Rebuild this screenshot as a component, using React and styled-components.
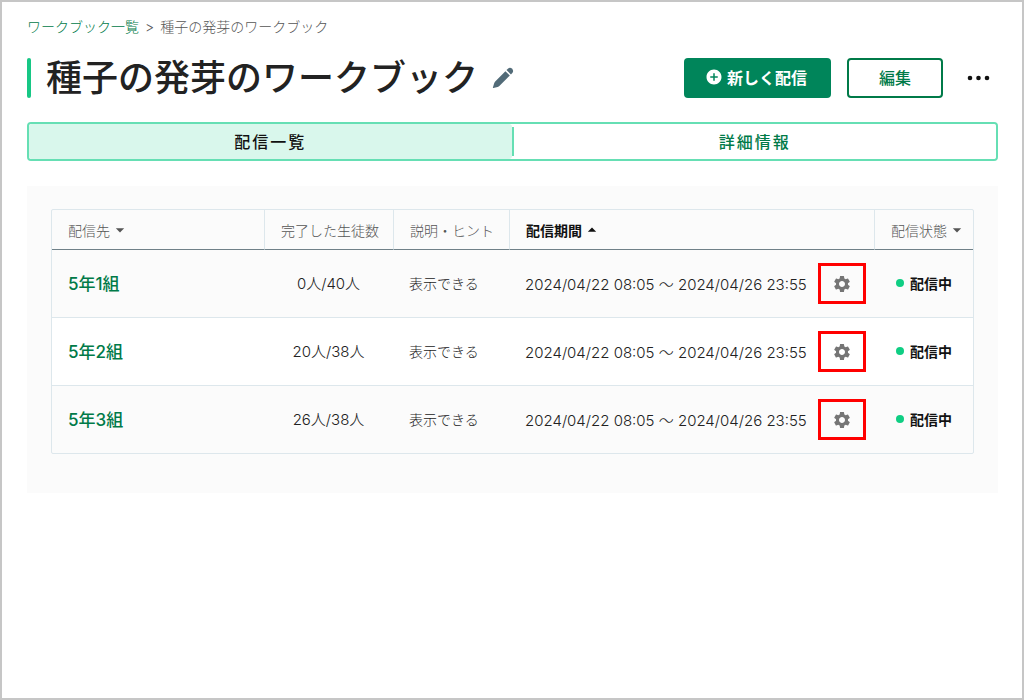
import React, { Fragment, useState } from "react";
import styled, { createGlobalStyle } from "styled-components";
import { MdAddCircle, MdArrowDropDown, MdArrowDropUp, MdSettings } from "react-icons/md";

const deliveries = [
    { id: 1, name: "5年1組", done: 0, total: 40 },
    { id: 2, name: "5年2組", done: 20, total: 38 },
    { id: 3, name: "5年3組", done: 26, total: 38 },
];

const tabs = ["配信一覧", "詳細情報"];

const PencilIcon = () => (
    <svg width="22" height="22" viewBox="0 0 22 22" fill="#526b78">
        <path d="M13.4 4.2 17.8 8.6 7.6 18.8 Q6.8 19.6 5.6 19.9 L1.4 21.1 Q.7 21.2.9 20.5 L2.1 16.4 Q2.4 15.2 3.2 14.4Z" />
        <path d="M14.5 3.1 15.9 1.7 Q18 0 20.2 1.8 Q22 4 20.3 6.1 L18.9 7.5Z" />
    </svg>
);

const App = () => {
    const [activeTab, setActiveTab] = useState(tabs[0]);

    return (
        <Page>
            <GlobalStyle />
            <Breadcrumb aria-label="パンくず">
                <CrumbLink href="#">ワークブック一覧</CrumbLink>
                <span>&gt;</span>
                <span>種子の発芽のワークブック</span>
            </Breadcrumb>

            <Header>
                <TitleBar>
                    <Title>種子の発芽のワークブック</Title>
                    <IconButton aria-label="名前を編集">
                        <PencilIcon />
                    </IconButton>
                </TitleBar>
                <Actions>
                    <PrimaryButton>
                        <MdAddCircle size={18} />
                        新しく配信
                    </PrimaryButton>
                    <OutlineButton>編集</OutlineButton>
                    <MenuButton aria-label="メニュー">
                        <svg width="24" height="6" viewBox="0 0 24 6" fill="#111">
                            <circle cx="3" cy="3" r="2.3" />
                            <circle cx="11.5" cy="3" r="2.3" />
                            <circle cx="20" cy="3" r="2.3" />
                        </svg>
                    </MenuButton>
                </Actions>
            </Header>

            <Tabs role="tablist">
                {tabs.map((tab, i) => (
                    <Fragment key={tab}>
                        {i > 0 && <TabDivider />}
                        <Tab
                            role="tab"
                            aria-selected={tab === activeTab}
                            $active={tab === activeTab}
                            onClick={() => setActiveTab(tab)}
                        >
                            {tab}
                        </Tab>
                    </Fragment>
                ))}
            </Tabs>

            <Panel>
                <Table>
                    <thead>
                        <tr>
                            <Th>
                                <SortButton>配信先<MdArrowDropDown size={20} /></SortButton>
                            </Th>
                            <Th $width={129}>完了した生徒数</Th>
                            <Th $width={116}>説明・ヒント</Th>
                            <Th $width={365}>
                                <SortButton $sorted>配信期間<MdArrowDropUp size={20} /></SortButton>
                            </Th>
                            <Th $width={99}>
                                <SortButton>配信状態<MdArrowDropDown size={20} /></SortButton>
                            </Th>
                        </tr>
                    </thead>
                    <tbody>
                        {deliveries.map((d) => (
                            <Row key={d.id}>
                                <Td><ClassLink href="#">{d.name}</ClassLink></Td>
                                <CountTd>{d.done}人/{d.total}人</CountTd>
                                <Td>表示できる</Td>
                                <PeriodTd>
                                    <Period>
                                        2024/04/22 08:05 〜 2024/04/26 23:55
                                        <SettingButton aria-label={`${d.name}の配信設定`}>
                                            <MdSettings size={20} />
                                        </SettingButton>
                                    </Period>
                                </PeriodTd>
                                <Td>
                                    <Status><Dot />配信中</Status>
                                </Td>
                            </Row>
                        ))}
                    </tbody>
                </Table>
            </Panel>
        </Page>
    );
};

const GlobalStyle = createGlobalStyle`
    * {
        box-sizing: border-box;
    }

    body {
        margin: 0;
        background-color: #fff;
        color: #222;
        font-family: "Inter", "Noto Sans CJK JP", sans-serif;
        font-size: 14px;
    }

    button {
        font-family: inherit;
        cursor: pointer;
    }
`;

const Page = styled.div`
    min-height: 100vh;
    padding: 15px 24px 24px 25px;
    border: 2px solid #c6c6c6;
`;

const Breadcrumb = styled.nav`
    display: flex;
    gap: 6px;
    line-height: 20px;
    font-weight: 300;
    color: #555;
`;

const CrumbLink = styled.a`
    color: #007a48;
    text-decoration: none;
`;

const Header = styled.header`
    display: flex;
    align-items: center;
    justify-content: space-between;
    margin-top: 21px;
`;

const TitleBar = styled.div`
    display: flex;
    align-items: center;
    gap: 10px;
`;

const Title = styled.h1`
    display: flex;
    align-items: center;
    margin: 0;
    font-size: 36px;
    line-height: 40px;
    font-weight: 500;
    color: #222;

    &::before {
        content: "";
        width: 4px;
        height: 40px;
        margin-right: 15px;
        border-radius: 2px;
        background-color: #17c785;
    }
`;

const IconButton = styled.button`
    display: flex;
    padding: 4px;
    border: none;
    background: none;
`;

const MenuButton = styled(IconButton)`
    margin-left: 4px;
`;

const Actions = styled.div`
    display: flex;
    align-items: center;
    gap: 16px;
    padding-right: 3px;
`;

const PrimaryButton = styled.button`
    display: flex;
    align-items: center;
    gap: 4px;
    height: 40px;
    padding: 0 24px 2px 21px;
    border: none;
    border-radius: 4px;
    background-color: #00855a;
    color: #fff;
    font-size: 16px;
    font-weight: 700;
`;

const OutlineButton = styled.button`
    height: 40px;
    padding: 0 30px 2px;
    border: 2px solid #007a48;
    border-radius: 4px;
    background-color: #fff;
    color: #007a48;
    font-size: 16px;
    font-weight: 500;
`;

const Tabs = styled.div`
    display: flex;
    margin-top: 24px;
    border: 2px solid #66dfb4;
    border-radius: 4px;
`;

const TabDivider = styled.span`
    width: 2px;
    margin: 3px 0;
    background-color: #66dfb4;
`;

const Tab = styled.button`
    flex: 1;
    height: 35px;
    padding: 0 0 2px;
    border: none;
    border-radius: 3px;
    background-color: ${({ $active }) => ($active ? "#d9f7ec" : "#fff")};
    color: ${({ $active }) => ($active ? "#111" : "#007a48")};
    font-size: 16px;
    font-weight: 500;
    letter-spacing: 2px;
`;

const Panel = styled.section`
    margin-top: 25px;
    padding: 23px 24px 39px;
    background-color: #fbfbfb;
`;

const Table = styled.table`
    width: 100%;
    table-layout: fixed;
    border-collapse: separate;
    border-spacing: 0;
    border: 1px solid #dde7ec;
    border-radius: 2px;
`;

const Th = styled.th`
    width: ${({ $width }) => ($width ? `${$width}px` : "auto")};
    height: 40px;
    padding: 0 0 0 16px;
    border-bottom: 1px solid #6f8088;
    color: #555;
    font-weight: 300;
    text-align: left;
    white-space: nowrap;

    & + & {
        border-left: 1px solid #dde7ec;
    }
`;

const SortButton = styled.button`
    display: flex;
    align-items: center;
    padding: 0;
    border: none;
    background: none;
    color: ${({ $sorted }) => ($sorted ? "#111" : "#555")};
    font-size: 14px;
    font-weight: ${({ $sorted }) => ($sorted ? 700 : 300)};
`;

const Row = styled.tr`
    &:nth-child(even) {
        background-color: #fff;
    }

    & + & > td {
        border-top: 1px solid #dde7ec;
    }
`;

const Td = styled.td`
    box-sizing: content-box;
    height: 65px;
    padding: 0 0 2px 16px;
    font-weight: 300;
    white-space: nowrap;
`;

const CountTd = styled(Td)`
    padding-left: 0;
    font-size: 15px;
    text-align: center;
`;

const PeriodTd = styled(Td)`
    height: 67px;
    padding-bottom: 0;
    font-size: 15px;
`;

const ClassLink = styled.a`
    color: #007a48;
    font-size: 17px;
    font-weight: 500;
    text-decoration: none;
`;

const Period = styled.div`
    display: flex;
    align-items: center;
    justify-content: space-between;
    padding-right: 8px;
`;

const SettingButton = styled.button`
    display: flex;
    align-items: center;
    justify-content: center;
    width: 48px;
    height: 41px;
    border: 3px solid #f00;
    background: none;
    color: #757575;
`;

const Status = styled.div`
    display: flex;
    align-items: center;
    gap: 6px;
    padding-left: 6px;
    color: #111;
    font-weight: 700;
`;

const Dot = styled.span`
    width: 8px;
    height: 8px;
    border-radius: 50%;
    background-color: #0fce83;
`;

export default App;
